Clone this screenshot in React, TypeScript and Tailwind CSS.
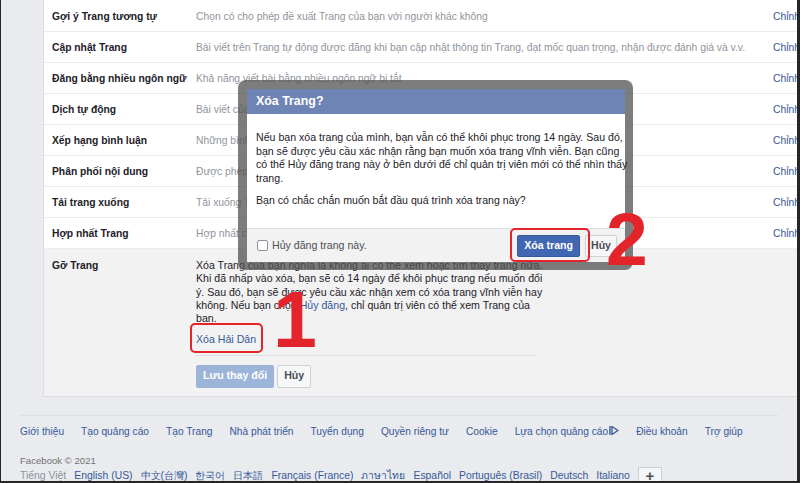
import React from 'react'

// Settings rows above the expanded "Gỡ Trang" section
const SETTINGS: [string, string][] = [
  ['Gợi ý Trang tương tự', 'Chọn có cho phép đề xuất Trang của bạn với người khác không'],
  ['Cập nhật Trang', 'Bài viết trên Trang tự động được đăng khi bạn cập nhật thông tin Trang, đạt mốc quan trọng, nhận được đánh giá và v.v.'],
  ['Đăng bằng nhiều ngôn ngữ', 'Khả năng viết bài bằng nhiều ngôn ngữ bị tắt'],
  ['Dịch tự động', 'Bài viết của bạn có thể hiển thị bản dịch tự động cho những người đọc ngôn ngữ khác'],
  ['Xếp hạng bình luận', 'Những bình luận phù hợp nhất sẽ hiển thị theo mặc định'],
  ['Phân phối nội dung', 'Được phép tải xuống video trên Facebook'],
  ['Tải trang xuống', 'Tải xuống Trang'],
  ['Hợp nhất Trang', 'Hợp nhất các Trang trùng lặp'],
]

const FOOTER_LINKS = [
  'Giới thiệu',
  'Tạo quảng cáo',
  'Tạo Trang',
  'Nhà phát triển',
  'Tuyển dụng',
  'Quyền riêng tư',
  'Cookie',
  'Lựa chọn quảng cáo',
  'Điều khoản',
  'Trợ giúp',
]

const LANGUAGES = [
  'English (US)',
  '中文(台灣)',
  '한국어',
  '日本語',
  'Français (France)',
  'ภาษาไทย',
  'Español',
  'Português (Brasil)',
  'Deutsch',
  'Italiano',
]

function AdChoicesIcon() {
  return (
    <svg width="10" height="11" viewBox="0 0 10 11" className="ml-[1px] inline-block align-[-1px]">
      <path d="M1 1v9" stroke="#365899" strokeWidth="1.4" />
      <path d="M3 1.5l6 4-6 4z" fill="none" stroke="#365899" strokeWidth="1.3" strokeLinejoin="round" />
    </svg>
  )
}

function SettingRow({ label, desc }: { label: string; desc: string }) {
  return (
    <div className="grid h-[31px] grid-cols-[144px_577px_auto] items-center border-b border-[#e9ebee] pl-[8px] pt-[2px] text-[10.3px]">
      <div className="font-bold text-[#1d2129]">{label}</div>
      <div className="truncate pr-2 text-[#90949c]">{desc}</div>
      <div className="whitespace-nowrap text-[#365899]">Chỉnh sửa</div>
    </div>
  )
}

function RemovePageRow() {
  return (
    <div className="grid grid-cols-[144px_1fr] bg-[#f2f2f2] pb-[8px] pl-[8px] pt-[10px] text-[10.6px]">
      <div className="text-[10.3px] font-bold leading-[13.25px] text-[#1d2129]">Gỡ Trang</div>
      <div className="w-[341px]">
        <div className="border-b border-[#dddfe2] pb-[8px]">
          <p className="whitespace-nowrap leading-[13.25px] text-[#1d2129]">
            Xóa Trang của bạn nghĩa là không ai có thể xem hoặc tìm thấy trang nữa.
            <br />
            Khi đã nhấp vào xóa, bạn sẽ có 14 ngày để khôi phục trang nếu muốn đổi
            <br />
            ý. Sau đó, bạn sẽ được yêu cầu xác nhận xem có xóa trang vĩnh viễn hay
            <br />
            không. Nếu bạn chọn <span className="text-[#365899]">Hủy đăng</span>, chỉ quản trị viên có thể xem Trang của
            <br />
            bạn.
          </p>
          <div className="mt-[8px] leading-[13.25px] text-[#365899]">Xóa Hải Dân</div>
        </div>
        <div className="flex gap-[3px] pt-[9px]">
          <button className="h-[23px] rounded-[2px] border border-[#9cb4d8] bg-[#9cb4d8] px-[6px] font-bold text-white">
            Lưu thay đổi
          </button>
          <button className="h-[23px] rounded-[2px] border border-[#ced0d4] bg-[#f6f7f9] px-[6px] font-bold text-[#4b4f56]">
            Hủy
          </button>
        </div>
      </div>
    </div>
  )
}

function DeleteDialog() {
  return (
    <div className="absolute left-[237px] top-[80px] h-[190px] w-[395px] rounded-[8px] bg-[rgba(82,82,82,0.75)] pb-[8px] pl-[9px] pr-[8px] pt-[9px]">
      <div className="flex h-full flex-col bg-white">
        <div className="flex h-[25px] items-center bg-[#6d84b4] pl-[9px] text-[12.4px] font-bold text-white">
          Xóa Trang?
        </div>
        <div className="h-[114px] px-[9px] pt-[17px] text-[10.6px] text-[#1d2129]">
          <p className="whitespace-nowrap leading-[13.6px]">
            Nếu bạn xóa trang của mình, bạn vẫn có thể khôi phục trong 14 ngày. Sau đó,
            <br />
            bạn sẽ được yêu cầu xác nhận rằng bạn muốn xóa trang vĩnh viễn. Bạn cũng
            <br />
            có thể Hủy đăng trang này ở bên dưới để chỉ quản trị viên mới có thể nhìn thấy
            <br />
            trang.
          </p>
          <p className="mt-[9px] leading-[13.6px]">Bạn có chắc chắn muốn bắt đầu quá trình xóa trang này?</p>
        </div>
        <div className="flex flex-1 items-center border-t border-[#dddfe2] bg-[#f2f2f2] pl-[10px] pr-[8px] text-[10.6px]">
          <span className="h-[11px] w-[11px] rounded-[2px] border border-[#8d949e] bg-white" />
          <span className="ml-[4px] text-[#4b4f56]">Hủy đăng trang này.</span>
          <div className="ml-auto flex gap-[5px]">
            <button className="h-[22px] rounded-[2px] border border-[#365899] bg-[#4267b2] px-[6px] font-bold text-white">
              Xóa trang
            </button>
            <button className="h-[22px] rounded-[2px] border border-[#ced0d4] bg-[#f6f7f9] px-[5px] font-bold text-[#4b4f56]">
              Hủy
            </button>
          </div>
        </div>
      </div>
    </div>
  )
}

export default function App() {
  return (
    <div className="h-[483px] w-[800px] border-b-2 border-l border-r-[3px] border-[#262626] font-['Liberation_Sans',Arial,sans-serif]">
      <div className="relative h-full overflow-hidden bg-[#e9ebee]">
        <div className="flex">
          <div className="w-[42px] shrink-0" />
          <div className="w-[800px] shrink-0 border-b border-l border-[#dddfe2] bg-white pt-px">
            {SETTINGS.map(([label, desc]) => (
              <SettingRow key={label} label={label} desc={desc} />
            ))}
            <RemovePageRow />
          </div>
        </div>

        <footer className="mx-[19px] mt-[18px] border-t border-[#dddfe2]">
          <div className="flex gap-[17px] pt-[9px] text-[10.2px] leading-[13px] text-[#365899]">
            {FOOTER_LINKS.map((link) => (
              <span key={link} className="whitespace-nowrap">
                {link}
                {link === 'Lựa chọn quảng cáo' && <AdChoicesIcon />}
              </span>
            ))}
          </div>
          <div className="mt-[17px] text-[9.6px] leading-[12px] text-[#737373]">Facebook © 2021</div>
          <div className="mt-[2px] flex items-start gap-[8px] whitespace-nowrap text-[10.4px] leading-[13px] text-[#365899]">
            <span className="text-[#90949c]">Tiếng Việt</span>
            {LANGUAGES.map((lang) => (
              <span key={lang}>{lang}</span>
            ))}
            <span className="-mt-[2px] flex h-[18px] w-[24px] items-center justify-center border border-[#ccd0d5] bg-[#f5f6f7] text-[15px] font-bold leading-none text-[#4b4f56]">
              +
            </span>
          </div>
        </footer>

        <DeleteDialog />

        {/* red step markers */}
        <div className="absolute left-[189px] top-[323px] h-[30px] w-[73px] rounded-[5px] border-[2.5px] border-[#e3242b]" />
        <div className="absolute left-[509px] top-[228px] h-[34px] w-[80px] rounded-[5px] border-[2.5px] border-[#e3242b]" />
        <div className="absolute left-[272px] top-[280px] text-[79px] font-black leading-none text-[#e3242b]">1</div>
        <div className="absolute left-[605px] top-[202px] text-[75px] font-black leading-none text-[#e3242b]">2</div>
      </div>
    </div>
  )
}
